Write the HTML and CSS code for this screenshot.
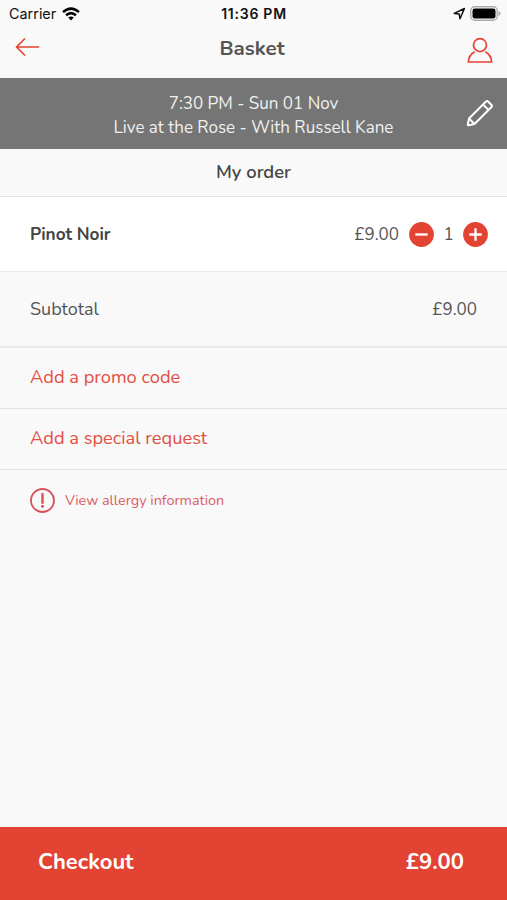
FILE: index.html
```html
<!DOCTYPE html>
<html lang="en">
<head>
<meta charset="utf-8">
<title>Basket</title>
<link rel="stylesheet" href="styles.css">
</head>
<body>
<div class="app">
  <div class="status">
    <div class="carrier"><span class="t-carrier">Carrier</span>
      <svg width="18" height="14" viewBox="0 0 18 14"><g fill="none" stroke="#000" stroke-width="2.5"><path d="M1 5.1Q9-1.9 17 5.1"/><path d="M4 8.3Q9 4 14 8.3"/></g><path d="M6.2 10.6Q9 8.4 11.8 10.6L9 13.6Z"/></svg>
    </div>
    <span class="t-clock">11:36 PM</span>
    <div class="indicators">
      <svg width="13" height="13" viewBox="0 0 13 13"><path d="M1.2 6.4 11.4 1.5 7 11.8 6.2 6.9Z" fill="none" stroke="#111" stroke-width="1.5" stroke-linejoin="round"/></svg>
      <svg width="31" height="15" viewBox="0 0 31 15"><rect x=".8" y=".8" width="26.4" height="13.4" rx="4" fill="#fff" stroke="#aaa" stroke-width="1.4"/><rect x="2.5" y="2.5" width="23" height="10" rx="2.2"/><path d="M28.5 5Q30.6 5.7 30.6 7.5T28.5 10Z" fill="#aaa"/></svg>
    </div>
  </div>
  <header class="nav">
    <svg class="back" width="25" height="20" viewBox="0 0 25 20"><path d="M9.5 2 1.5 10 9.5 18M2 10H23.5" fill="none" stroke="#e34332" stroke-width="1.7" stroke-linecap="round" stroke-linejoin="round"/></svg>
    <h1 class="t-title">Basket</h1>
    <svg class="account" width="26" height="27" viewBox="0 0 26 27"><g fill="none" stroke="#e34332" stroke-width="1.7" stroke-linejoin="round"><circle cx="13" cy="8.1" r="6.5"/><path d="M7.6 14.8C3.8 17 1.6 20.2 1.3 25H24.7C24.4 20.2 22.2 17 18.4 14.8"/></g></svg>
  </header>
  <section class="event">
    <p>7:30 PM - Sun 01 Nov</p>
    <p>Live at the Rose - With Russell Kane</p>
    <svg class="edit" width="28" height="28" viewBox="0 0 28 28"><g fill="none" stroke="#fff" stroke-width="2" stroke-linejoin="round"><path d="M3 19.5 20 2.5Q21 1.5 22 2.5L25.5 6Q26.5 7 25.5 8L8.5 25 2.7 26.3Q1.7 26.3 1.8 25.2Z"/><path d="M3 19.5 8.5 25M17 5.5 22.5 11"/></g></svg>
  </section>
  <h2 class="heading">My order</h2>
  <div class="item">
    <span class="t-item">Pinot Noir</span>
    <span class="t-price price">£9.00</span>
    <svg width="25" height="25" viewBox="0 0 25 25"><circle cx="12.5" cy="12.5" r="12.4" fill="#e34332"/><path d="M6.3 12.5H18.7" stroke="#fff" stroke-width="2.3"/></svg>
    <span class="qty">1</span>
    <svg width="25" height="25" viewBox="0 0 25 25"><circle cx="12.5" cy="12.5" r="12.4" fill="#e34332"/><path d="M6.3 12.5H18.7M12.5 6.3V18.7" stroke="#fff" stroke-width="2.3"/></svg>
  </div>
  <div class="subtotal"><span>Subtotal</span><span class="t-price">£9.00</span></div>
  <div class="link"><span>Add a promo code</span></div>
  <div class="link"><span>Add a special request</span></div>
  <div class="allergy">
    <svg width="25" height="25" viewBox="0 0 25 25"><circle cx="12.5" cy="12.5" r="11.5" fill="none" stroke="#d75258" stroke-width="1.8"/><path d="M12.5 6V14.8" stroke="#d75258" stroke-width="2.4" stroke-linecap="round"/><circle cx="12.5" cy="18.3" r="1.5" fill="#d75258"/></svg>
    <span class="t-allergy">View allergy information</span>
  </div>
  <footer class="checkout"><span>Checkout</span><span>£9.00</span></footer>
</div>
</body>
</html>
```
FILE: styles.css
```css
* { box-sizing: border-box; }
body { margin: 0; }
h1, h2, p { margin: 0; }
svg { display: block; flex: none; }
.app {
  width: 507px;
  height: 900px;
  display: flex;
  flex-direction: column;
  background: #f9f9f9;
  color: #555;
  font-family: Nunito, Lato, sans-serif;
  font-size: 18px;
}
.status {
  display: grid;
  grid-template-columns: 1fr auto 1fr;
  align-items: center;
  height: 27px;
  padding: 0 6px 0 9px;
  font-family: Inter, sans-serif;
  color: #111;
}
.carrier, .indicators { display: flex; align-items: center; gap: 6px; }
.indicators { justify-content: flex-end; gap: 4px; }
.t-carrier { font-size: 14.4px; }
.t-clock { margin-right: 2px; font-size: 14px; font-weight: 600; letter-spacing: 0.75px; }
.nav {
  display: grid;
  grid-template-columns: 1fr auto 1fr;
  align-items: center;
  height: 51px;
  padding: 0 14px 8px 15px;
}
.back { margin-bottom: 4px; }
.account { justify-self: end; margin-top: 3px; }
.t-title {
  margin: 0 4px 2px 0;
  font-size: 20.5px;
  font-weight: 700;
  line-height: 24px;
}
.event {
  position: relative;
  height: 71px;
  padding-top: 14px;
  background: #757575;
  color: #f0f0f0;
  text-align: center;
  line-height: 24px;
  font-size: 17px;
}
.edit { position: absolute; right: 13px; top: 21px; }
.heading {
  height: 48px;
  border-bottom: 1px solid #e5e5e5;
  text-align: center;
  font-size: 18.4px;
  font-weight: 650;
  line-height: 46px;
  color: #444;
}
.item {
  height: 74px;
  display: flex;
  align-items: center;
  padding: 0 19px 0 30px;
  background: #fff;
}
.t-item { padding-top: 1px; font-size: 17.2px; font-weight: 700; color: #444; }
.t-price { font-size: 17px; }
.price { margin-left: auto; margin-right: 10px; padding-top: 1px; }
.qty { width: 29px; padding-top: 1px; text-align: center; font-size: 17px; }
.subtotal {
  height: 77px;
  display: flex;
  align-items: center;
  justify-content: space-between;
  padding: 0 30px;
  border-top: 1px solid #e9e9e9;
  border-bottom: 2px solid #e9e9e9;
}
.link {
  height: 61px;
  display: flex;
  align-items: center;
  padding: 0 0 2px 30px;
  border-bottom: 1px solid #e2e2e2;
  color: #e34f42;
  font-size: 18.3px;
}
.allergy {
  display: flex;
  align-items: center;
  gap: 10px;
  padding: 18px 30px;
  color: #d95d63;
  font-size: 14.4px;
}
.t-allergy { padding-bottom: 1px; }
.checkout {
  height: 73px;
  margin-top: auto;
  display: flex;
  align-items: center;
  justify-content: space-between;
  padding: 0 43px 3px 38px;
  background: #e34332;
  color: #fff;
  font-size: 22px;
  font-weight: 700;
}
```
